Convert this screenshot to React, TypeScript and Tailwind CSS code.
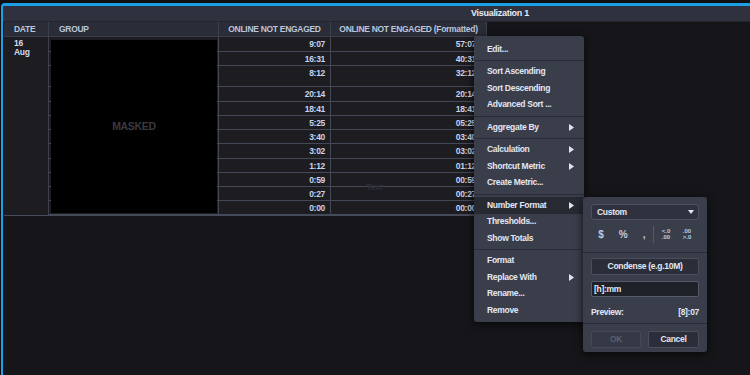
import React from "react";

const rows: [string, string][] = [
  ["9:07", "57:07"],
  ["16:31", "40:31"],
  ["8:12", "32:12"],
  ["20:14", "20:14"],
  ["18:41", "18:41"],
  ["5:25", "05:25"],
  ["3:40", "03:40"],
  ["3:02", "03:02"],
  ["1:12", "01:12"],
  ["0:59", "00:59"],
  ["0:27", "00:27"],
  ["0:00", "00:00"],
];

type Item = { label?: string; sub?: boolean; active?: boolean; sep?: boolean };

const menu: Item[] = [
  { label: "Edit..." },
  { sep: true },
  { label: "Sort Ascending" },
  { label: "Sort Descending" },
  { label: "Advanced Sort ..." },
  { sep: true },
  { label: "Aggregate By", sub: true },
  { sep: true },
  { label: "Calculation", sub: true },
  { label: "Shortcut Metric", sub: true },
  { label: "Create Metric..." },
  { sep: true },
  { label: "Number Format", sub: true, active: true },
  { label: "Thresholds..." },
  { label: "Show Totals" },
  { sep: true },
  { label: "Format" },
  { label: "Replace With", sub: true },
  { label: "Rename..." },
  { label: "Remove" },
];

function Arrow() {
  return (
    <svg width="5" height="7" viewBox="0 0 5 7" className="shrink-0">
      <path d="M0 0 L5 3.5 L0 7 Z" fill="#dfe4f1" />
    </svg>
  );
}

export default function App() {
  return (
    <div className="relative w-[750px] h-[375px] overflow-hidden bg-[#0f1014] pt-[3px] pl-[1px] font-['Liberation_Sans',Arial,sans-serif] font-bold text-[8.5px] tracking-[-0.3px]">
      <div className="w-[996px] h-[372px] border-l-2 border-t-[3px] border-[#1c9fe7] rounded-tl-[4px] bg-[#16161a] flex flex-col">
        <div className="h-[16px] bg-[#2f323e] flex items-center justify-center text-[#e7ebf6] text-[9px] border-b border-[#23252d]">
          Visualization 1
        </div>
        <div className="relative ml-[1px] w-[483px]">
          {/* header */}
          <div className="grid grid-cols-[45px_170px_112px_156px] h-[15px] bg-[#2a2c37] text-[#bcc5da] border-b border-[#3a3e4a]">
            <div className="flex items-center pl-[10px] border-r border-[#3c404c]">DATE</div>
            <div className="flex items-center pl-[10px] border-r border-[#3c404c]">GROUP</div>
            <div className="flex items-center justify-center border-r border-[#3c404c]">ONLINE NOT ENGAGED</div>
            <div className="flex items-center justify-center border-r border-[#3c404c]">ONLINE NOT ENGAGED (Formatted)</div>
          </div>
          {/* body */}
          <div className="relative grid grid-cols-[45px_170px_112px_156px] grid-rows-[15px_14px_21px_15px_14px_14px_14px_15px_14px_14px_14px_14px] bg-[#1c1c21] text-[#cbd3ea] border-b border-[#464b59]">
            <div className="row-span-12 border-r border-[#3c404c] pl-[10px] pt-[2px] leading-[9px] text-[#d3daf0]">
              <div>16</div>
              <div>Aug</div>
            </div>
            {rows.map(([a, b], i) => (
              <React.Fragment key={i}>
                <div className="border-r border-b border-[#444958]" />
                <div className="border-r border-b border-[#444958] flex justify-end pr-[5px] pt-[2px] leading-[10px]">{a}</div>
                <div className="border-r border-b border-[#444958] flex justify-end pr-[10px] pt-[2px] leading-[10px]">{b}</div>
              </React.Fragment>
            ))}
            <div className="absolute left-[47px] top-[3px] bottom-[2px] w-[166px] bg-black flex items-center justify-center text-[#3a3a3f] text-[10.5px]">
              MASKED
            </div>
          </div>
        </div>
      </div>

      {/* faint placeholder */}
      <div className="absolute left-[366px] top-[181px] text-[#2e2e36] text-[9px]">Text</div>

      {/* context menu */}
      <div className="absolute left-[474px] top-[36px] w-[110px] h-[286px] rounded-[3px] bg-[#3a3e4b] shadow-[0_2px_8px_rgba(0,0,0,0.7)] pt-[5px] text-[#e3e7f3] text-[8.5px]">
        {menu.map((m, i) =>
          m.sep ? (
            <div key={i} className="h-[6px] flex items-center">
              <div className="w-full border-t border-[#2a2d37]" />
            </div>
          ) : (
            <div
              key={i}
              className={`h-[16.5px] flex items-center justify-between pl-[13px] pr-[10px] ${m.active ? "bg-[#272a33]" : ""}`}
            >
              <span>{m.label}</span>
              {m.sub && <Arrow />}
            </div>
          )
        )}
      </div>

      {/* number format submenu */}
      <div className="absolute left-[583px] top-[197px] w-[124px] h-[155px] rounded-[3px] bg-[#3a3e4b] shadow-[0_2px_8px_rgba(0,0,0,0.7)] flex flex-col text-[#e3e7f3]">
        <div className="px-[8px] pt-[7px]">
          <div className="h-[16px] rounded-[3px] border border-[#4c5160] bg-[#2f323e] flex items-center justify-between pl-[5px] pr-[4px]">
            <span>Custom</span>
            <svg width="6" height="4" viewBox="0 0 6 4">
              <path d="M0 0 L6 0 L3 4 Z" fill="#e3e7f3" />
            </svg>
          </div>
          <div className="h-[28px] flex items-center text-[#c3cadc]">
            <div className="w-[20px] text-center text-[10px]">$</div>
            <div className="w-[24px] text-center text-[10px]">%</div>
            <div className="w-[18px] text-center text-[10px]">,</div>
            <div className="w-px h-[17px] bg-[#555a68]" />
            <div className="w-[24px] flex flex-col items-center text-[6px] leading-[6px] tracking-normal">
              <span>&lt;.0</span>
              <span>.00</span>
            </div>
            <div className="w-[18px] flex flex-col items-center text-[6px] leading-[6px] tracking-normal">
              <span>.00</span>
              <span>&gt;.0</span>
            </div>
          </div>
        </div>
        <div className="mt-[4px] border-t border-[#2a2d37]" />
        <div className="px-[8px] pt-[5px]">
          <div className="h-[17px] rounded-[2px] border border-[#4a4f5d] bg-[#2b2e39] flex items-center justify-center">
            Condense (e.g.10M)
          </div>
          <div className="mt-[6px] h-[16px] rounded-[2px] border border-[#555b6a] bg-[#1f2129] flex items-center pl-[2px]">
            [h]:mm
          </div>
          <div className="mt-[8px] h-[14px] flex items-center justify-between">
            <span>Preview:</span>
            <span>[8]:07</span>
          </div>
        </div>
        <div className="mt-[4px] border-t border-[#2a2d37]" />
        <div className="px-[8px] pt-[7px] flex gap-[7px]">
          <div className="w-[50px] h-[17px] rounded-[2px] border border-[#454957] bg-[#353845] flex items-center justify-center text-[#5c6170]">
            OK
          </div>
          <div className="w-[51px] h-[17px] rounded-[2px] border border-[#4a4f5d] bg-[#2b2e39] flex items-center justify-center">
            Cancel
          </div>
        </div>
      </div>
    </div>
  );
}
